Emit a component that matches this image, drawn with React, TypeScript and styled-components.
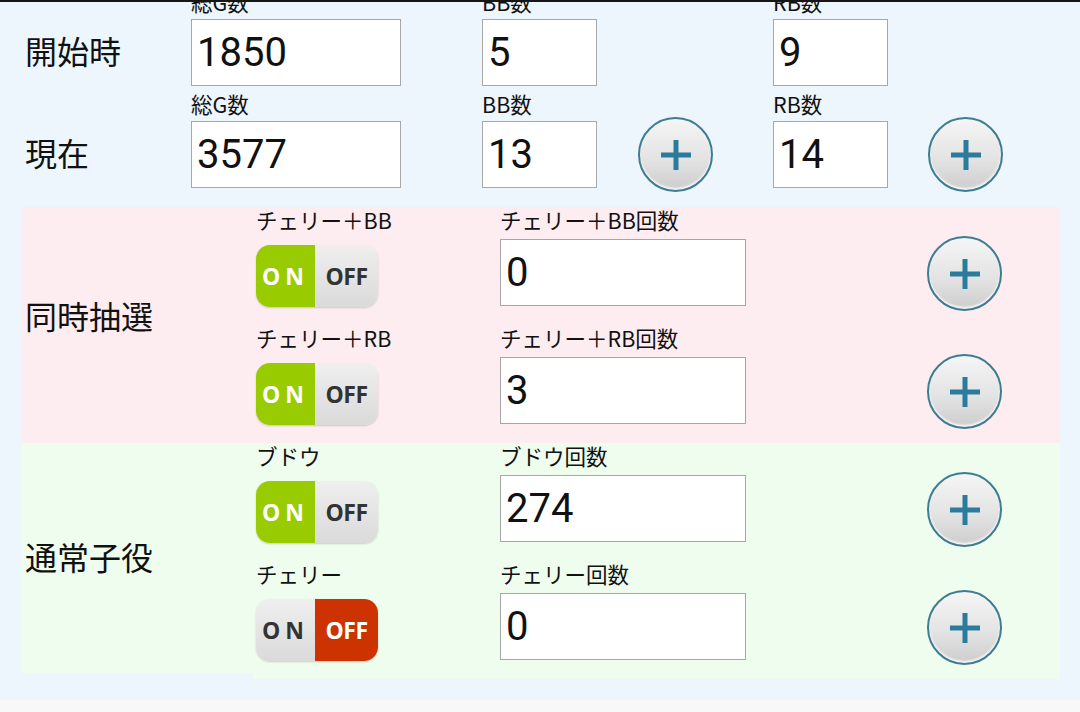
import styled, { createGlobalStyle } from "styled-components"

const GlobalStyle = createGlobalStyle`
  html, body {
    margin: 0;
    padding: 0;
    overflow: hidden;
  }
  body {
    font-family: Roboto, "Noto Sans CJK JP", sans-serif;
    color: #111;
  }
`

const Page = styled.div`
  width: 1080px;
  height: 712px;
  display: flex;
  flex-direction: column;
  background: #edf6fd;
  border-top: 2px solid #161616;
  box-sizing: border-box;
  overflow: hidden;
`

const Main = styled.main`
  flex: 1;
  overflow: hidden;
`

const Footer = styled.div`
  height: 12px;
  background: #f8f8f8;
`

const TopBlock = styled.div`
  margin: -18px 0 0 22px;
`

const TopRow = styled.div`
  display: grid;
  grid-template-columns: 169px 291px 156px 135px 155px 74px;
`

const RowLabel = styled.div`
  align-self: end;
  height: 67px;
  box-sizing: border-box;
  display: flex;
  align-items: center;
  padding: 0 0 5px 3px;
  font-family: "Noto Sans CJK JP", sans-serif;
  font-size: 32px;
`

const FieldCell = styled.div`
  display: flex;
  flex-direction: column;
`

const FieldLabel = styled.div<{ $tall?: boolean }>`
  height: ${(p) => (p.$tall ? "35px" : "26px")};
  line-height: ${(p) => (p.$tall ? "35px" : "26px")};
  font-family: "Noto Sans CJK JP", sans-serif;
  font-size: 21.5px;
  white-space: nowrap;
`

const ValueInput = styled.input<{ $w: number; $gap?: number }>`
  width: ${(p) => p.$w}px;
  height: 67px;
  margin-top: ${(p) => p.$gap ?? 0}px;
  box-sizing: border-box;
  border: 1px solid #a7a7a7;
  border-radius: 0;
  background: #fff;
  padding: 0 0 0 5px;
  font-family: Roboto, sans-serif;
  font-size: 40px;
  color: #111;
  outline: none;
`

const PlusCell = styled.div<{ $top?: number }>`
  align-self: ${(p) => (p.$top === undefined ? "end" : "start")};
  height: ${(p) => (p.$top === undefined ? "67px" : "auto")};
  padding-top: ${(p) => p.$top ?? 0}px;
  display: flex;
  align-items: center;
`

const PlusButton = styled.button`
  width: 75px;
  height: 75px;
  flex: none;
  border-radius: 50%;
  border: 2px solid #3c7d93;
  background: linear-gradient(#f5f5f5 0%, #e4e4e4 55%, #cdcdcd 100%);
  box-shadow: inset 0 -2px 2px rgba(255, 255, 255, 0.8);
  display: flex;
  align-items: center;
  justify-content: center;
  padding: 0;
`

const Section = styled.section`
  display: flex;
  margin: 19px 20px 0 22px;
  & + & {
    margin-top: 0;
  }
`

const SectionLabel = styled.div<{ $bg: string; $cut?: number; $lift?: number }>`
  width: 228px;
  padding: 0 0 ${(p) => p.$lift ?? 0}px 3px;
  margin-bottom: ${(p) => p.$cut ?? 0}px;
  background: ${(p) => p.$bg};
  display: flex;
  align-items: center;
  font-family: "Noto Sans CJK JP", sans-serif;
  font-size: 32px;
`

const SectionBody = styled.div<{ $bg: string }>`
  flex: 1;
  padding-left: 3px;
  background: ${(p) => p.$bg};
`

const SubRow = styled.div`
  display: grid;
  grid-template-columns: 244px 427px 74px;
  height: 118px;
`

const ToggleCell = styled.div`
  display: flex;
  flex-direction: column;
`

const Switch = styled.div`
  margin-top: 12px;
  width: 122px;
  height: 62px;
  display: flex;
  border-radius: 14px;
  overflow: hidden;
  box-shadow: 0 1px 2px rgba(0, 0, 0, 0.18);
`

const SwitchHalf = styled.div<{ $active: boolean; $color: string; $w: number; $spacing?: number }>`
  width: ${(p) => p.$w}px;
  display: flex;
  align-items: center;
  justify-content: center;
  font-family: "Open Sans", sans-serif;
  font-weight: 700;
  font-size: 23px;
  letter-spacing: ${(p) => p.$spacing ?? -0.5}px;
  color: ${(p) => (p.$active ? "#fff" : "#333")};
  background: ${(p) =>
    p.$active ? p.$color : "linear-gradient(#efefef, #dadada)"};
`

function PlusIcon() {
  return (
    <svg width="32" height="32" viewBox="0 0 32 32">
      <path d="M16 1v30M1 16h30" stroke="#2b7c9c" strokeWidth="5" />
    </svg>
  )
}

function Plus({ top }: { top?: number }) {
  return (
    <PlusCell $top={top}>
      <PlusButton>
        <PlusIcon />
      </PlusButton>
    </PlusCell>
  )
}

function Toggle({ on }: { on: boolean }) {
  return (
    <Switch>
      <SwitchHalf $active={on} $color="#99cc00" $w={59} $spacing={5}>
        ON
      </SwitchHalf>
      <SwitchHalf $active={!on} $color="#cc3300" $w={63}>
        OFF
      </SwitchHalf>
    </Switch>
  )
}

type Row = { name: string; label: string; value: string; on: boolean }

function SubRows({ rows }: { rows: Row[] }) {
  return (
    <>
      {rows.map((r) => (
        <SubRow key={r.name}>
          <ToggleCell>
            <FieldLabel>{r.name}</FieldLabel>
            <Toggle on={r.on} />
          </ToggleCell>
          <FieldCell>
            <FieldLabel>{r.label}</FieldLabel>
            <ValueInput $w={246} $gap={6} readOnly value={r.value} />
          </FieldCell>
          <Plus top={29} />
        </SubRow>
      ))}
    </>
  )
}

const PINK = "#fdedf1"
const GREEN = "#effdee"

export default function App() {
  return (
    <>
      <GlobalStyle />
      <Page>
        <Main>
          <TopBlock>
            <TopRow>
              <RowLabel>開始時</RowLabel>
              <FieldCell>
                <FieldLabel $tall>総G数</FieldLabel>
                <ValueInput $w={210} readOnly value="1850" />
              </FieldCell>
              <FieldCell>
                <FieldLabel $tall>BB数</FieldLabel>
                <ValueInput $w={115} readOnly value="5" />
              </FieldCell>
              <div />
              <FieldCell>
                <FieldLabel $tall>RB数</FieldLabel>
                <ValueInput $w={115} readOnly value="9" />
              </FieldCell>
            </TopRow>
            <TopRow>
              <RowLabel>現在</RowLabel>
              <FieldCell>
                <FieldLabel $tall>総G数</FieldLabel>
                <ValueInput $w={210} readOnly value="3577" />
              </FieldCell>
              <FieldCell>
                <FieldLabel $tall>BB数</FieldLabel>
                <ValueInput $w={115} readOnly value="13" />
              </FieldCell>
              <Plus />
              <FieldCell>
                <FieldLabel $tall>RB数</FieldLabel>
                <ValueInput $w={115} readOnly value="14" />
              </FieldCell>
              <Plus />
            </TopRow>
          </TopBlock>

          <Section>
            <SectionLabel $bg={PINK} $lift={20}>
              同時抽選
            </SectionLabel>
            <SectionBody $bg={PINK}>
              <SubRows
                rows={[
                  { name: "チェリー＋BB", label: "チェリー＋BB回数", value: "0", on: true },
                  { name: "チェリー＋RB", label: "チェリー＋RB回数", value: "3", on: true },
                ]}
              />
            </SectionBody>
          </Section>

          <Section>
            <SectionLabel $bg={GREEN} $cut={6} $lift={5}>
              通常子役
            </SectionLabel>
            <SectionBody $bg={GREEN}>
              <SubRows
                rows={[
                  { name: "ブドウ", label: "ブドウ回数", value: "274", on: true },
                  { name: "チェリー", label: "チェリー回数", value: "0", on: false },
                ]}
              />
            </SectionBody>
          </Section>
        </Main>
        <Footer />
      </Page>
    </>
  )
}
